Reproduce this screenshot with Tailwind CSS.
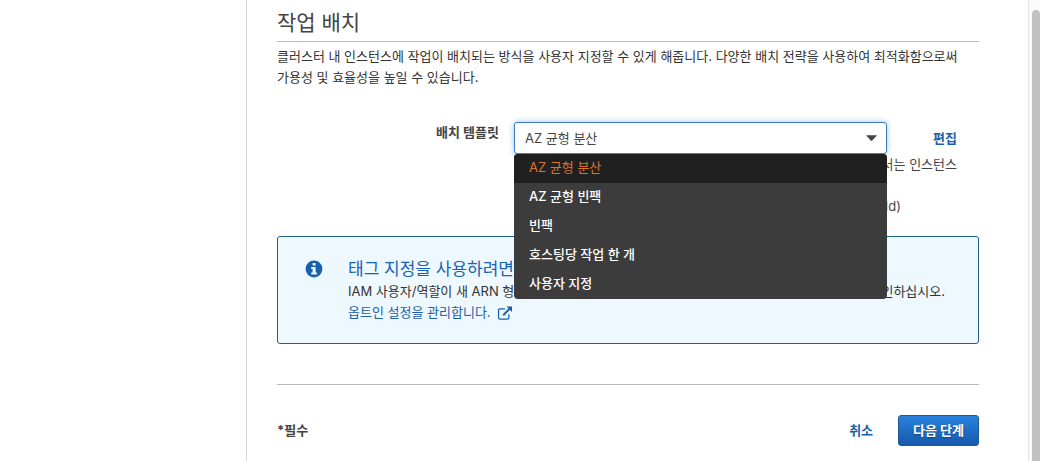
<!DOCTYPE html>
<html lang="ko">
<head>
<meta charset="utf-8">
<meta name="viewport" content="width=device-width, initial-scale=1">
<title>작업 배치</title>
<script src="https://cdn.jsdelivr.net/npm/@tailwindcss/browser@4"></script>
</head>
<body class="flex min-h-screen bg-white font-['Inter','Noto_Sans_CJK_KR',sans-serif] text-[13px] leading-[21px] text-[#444]">
<aside class="w-[247px] shrink-0 border-r border-[#d5d5d5]" aria-label="탐색"></aside>

<main class="min-w-0 flex-1 pl-[30px] pr-[49px]">
  <h2 class="border-b border-[#bbb] pt-2 pb-1 text-[21px] leading-[29px]">작업 배치</h2>
  <p class="mt-1 break-keep text-[#333]">클러스터 내 인스턴스에 작업이 배치되는 방식을 사용자 지정할 수 있게 해줍니다. 다양한 배치 전략을 사용하여 최적화함으로써 가용성 및 효율성을 높일 수 있습니다.</p>

  <form>
    <div class="mt-[34px] flex gap-[15px]">
      <label for="template" class="w-[222px] shrink-0 text-right font-bold">배치 템플릿</label>
      <div class="min-w-0 flex-1 pr-[22px]">
        <div class="flex items-center justify-between">
          <div class="relative w-[373px]">
            <select id="template" class="block h-8 w-full appearance-none rounded-[3px] border border-[#3b7cc0] bg-white px-2.5 text-[13px] text-[#444] shadow-[0_0_6px_#9dc3f5] outline-none">
              <option>AZ 균형 분산</option>
              <option>AZ 균형 빈팩</option>
              <option>빈팩</option>
              <option>호스팅당 작업 한 개</option>
              <option>사용자 지정</option>
            </select>
            <svg class="pointer-events-none absolute top-[13px] right-2.5 h-[6px] w-[11px]" viewBox="0 0 11 6" aria-hidden="true"><path d="M0 .3h11L6.3 5.5q-.8.7-1.6 0z" fill="#444"/></svg>
            <ul role="listbox" aria-label="배치 템플릿" class="absolute top-full left-0 z-10 w-full overflow-hidden rounded bg-[#3c3c3c] font-medium text-white">
              <li role="option" aria-selected="true" class="bg-[#202020] px-[15px] pt-[3px] pb-[5px] font-normal text-[#d87430]">AZ 균형 분산</li>
              <li role="option" aria-selected="false" class="px-[15px] pt-[3px] pb-[5px]">AZ 균형 빈팩</li>
              <li role="option" aria-selected="false" class="px-[15px] pt-[3px] pb-[5px]">빈팩</li>
              <li role="option" aria-selected="false" class="px-[15px] pt-[3px] pb-[5px]">호스팅당 작업 한 개</li>
              <li role="option" aria-selected="false" class="px-[15px] pt-[3px] pb-[5px]">사용자 지정</li>
            </ul>
          </div>
          <a href="#edit" class="font-bold text-[#1a5fa8]">편집</a>
        </div>
        <p class="text-right">가용 영역에 작업을 분산하고 가용 영역 내에서는 인스턴스</p>
        <p>에 작업을 분산합니다.</p>
        <p class="pr-14 text-right">spread(ecs.availability-zone), spread(instanceId)</p>
      </div>
    </div>

    <section class="mt-[19px] flex rounded-[3px] border border-[#1f6089] bg-[#eef8ff] pt-5 pr-[33px] pb-5 pl-[27px]">
      <svg class="mt-[3px] mr-[25px] size-[18px] shrink-0" viewBox="0 0 18 18" aria-hidden="true"><circle cx="9" cy="9" r="8.4" fill="#1760ad"/><path d="M7.6 3h3v2.5h-3zM6.2 7h4.4v5.5h1.3v2H6.2v-2h1.4V9H6.2z" fill="#eef8ff"/></svg>
      <div class="min-w-0 flex-1">
        <h3 class="text-[17px] leading-6 text-[#1a62b0]">태그 지정을 사용하려면</h3>
        <p class="flex justify-between text-[#333]"><span>IAM 사용자/역할이 새 ARN 형식에</span> <span>옵트인되어 있는지 확인하십시오.</span></p>
        <a href="#opt-in" class="flex w-fit items-center gap-1.5 text-[#1a5fa8]">옵트인 설정을 관리합니다.
          <svg class="size-4 shrink-0" viewBox="0 0 16 16" fill="none" stroke="#1a5fa8" aria-hidden="true"><path d="M8 3.8H3.2Q1.5 3.8 1.5 5.5v7Q1.5 14.2 3.2 14.2h7q1.7 0 1.7-1.7V9.2" stroke-width="1.2"/><path d="M6.2 10.2 13 3.4" stroke-width="2"/><path d="M9.5 1.5H15V7z" fill="#1a5fa8" stroke="none"/></svg>
        </a>
      </div>
    </section>

    <footer class="mt-10 flex items-center border-t border-[#bbb] pt-[30px]">
      <strong>*필수</strong>
      <button type="button" class="ml-auto font-bold text-[#1a5fa8]">취소</button>
      <button type="submit" class="ml-[25px] h-[31px] rounded-[3px] border border-[#1f5997] bg-linear-to-b from-[#2a82dc] to-[#1659ac] px-3.5 font-bold text-white text-shadow-[0_1px_1px_#0005]">다음 단계</button>
    </footer>
  </form>
</main>

<div class="flex w-3 shrink-0 border-l border-[#e4e4e4] bg-[#fafafa] pt-2.5 pl-[3px]" aria-hidden="true">
  <div class="flex-1 rounded-t bg-[#c1c1c1]"></div>
</div>
</body>
</html>
